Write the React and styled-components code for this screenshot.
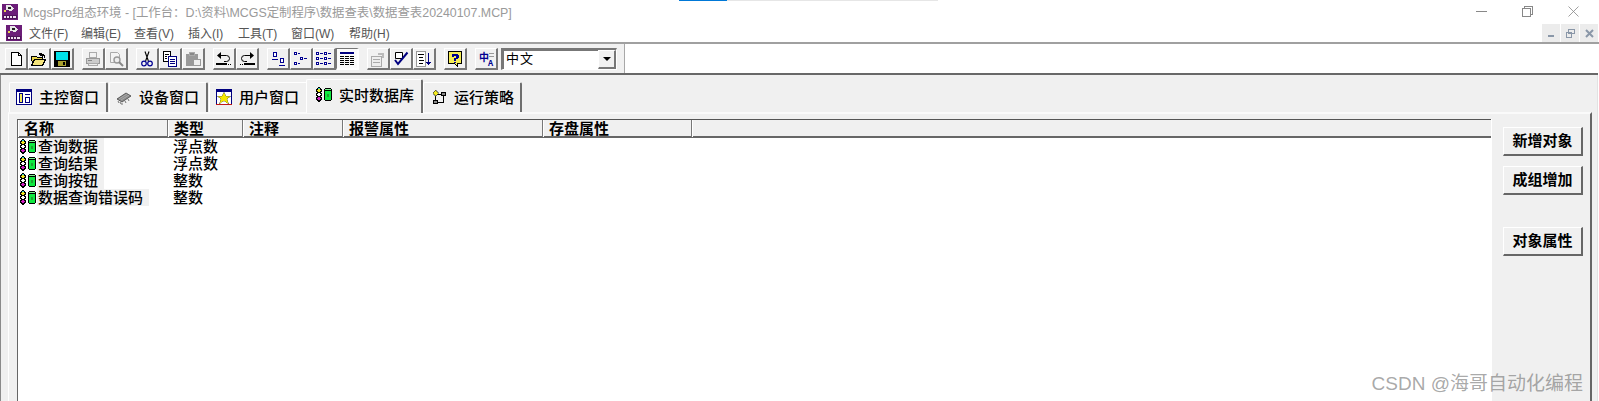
import styled, { createGlobalStyle } from "styled-components";

const GlobalStyle = createGlobalStyle`
  html, body {
    margin: 0;
    padding: 0;
    background: #fff;
  }
  * {
    box-sizing: border-box;
  }
`;

const CJK = `"Liberation Sans", "Noto Sans CJK SC", sans-serif`;

const AppWindow = styled.div`
  position: relative;
  width: 1599px;
  height: 401px;
  overflow: hidden;
  display: flex;
  flex-direction: column;
  font-family: ${CJK};
  background: #fff;
`;

const FocusStrip = styled.div`
  position: absolute;
  top: 0;
  left: 679px;
  width: 259px;
  height: 1px;
  background: linear-gradient(90deg, #0078d7 0 48px, #e6e6e6 48px);
`;

const TitleBar = styled.div`
  height: 23px;
  display: flex;
  align-items: center;
  padding-left: 2px;
  color: #9a9a9a;
  font-size: 12.4px;
  flex: none;
`;

const TitleText = styled.span`
  margin-left: 5px;
  white-space: nowrap;
`;

const WindowControls = styled.div`
  margin-left: auto;
  display: flex;
  gap: 35px;
  padding-right: 20px;
  svg {
    display: block;
  }
`;

const MenuBar = styled.div`
  height: 21px;
  display: flex;
  align-items: center;
  padding-left: 6px;
  border-bottom: 2px solid #a0a0a0;
  flex: none;
`;

const MenuItems = styled.div`
  display: flex;
  margin-left: 7px;
`;

const MenuItem = styled.span`
  width: ${(p) => p.$width}px;
  color: #555;
  font-size: 12px;
  white-space: nowrap;
`;

const MdiControls = styled.div`
  margin-left: auto;
  display: flex;
  gap: 1px;
  align-self: flex-start;
  margin-top: 1px;
  padding-right: 1px;
`;

const MdiButton = styled.div`
  width: 18px;
  height: 18px;
  background: #ececec;
  display: flex;
  align-items: center;
  justify-content: center;
`;

const ToolbarRow = styled.div`
  height: 31px;
  margin-right: 1px;
  display: flex;
  flex: none;
  border-bottom: 2px solid #686868;
`;

const Toolbar = styled.div`
  width: 625px;
  display: flex;
  align-items: flex-start;
  padding: 4px 0 0 5px;
  background: #f1f1f1;
  border-right: 1px solid #a8a8a8;
`;

const ToolGroup = styled.div`
  display: flex;
  margin-right: ${(p) => p.$after}px;
`;

const ToolButton = styled.div`
  width: 23px;
  height: 22px;
  display: flex;
  align-items: center;
  justify-content: center;
  background: ${(p) => (p.$pressed ? "#fbfbfb" : "#f1f1f1")};
  border-style: solid;
  border-width: 1px 2px 2px 1px;
  border-color: ${(p) =>
    p.$pressed
      ? "#777 #fff #fff #777"
      : "#fff #777 #777 #fff"};
`;

const LangSelect = styled.div`
  width: 116px;
  height: 22px;
  margin-left: 3px;
  display: flex;
  align-items: stretch;
  background: #fff;
  border-style: solid;
  border-width: 2px 1px 1px 2px;
  border-color: #777 #fff #fff #777;
  box-shadow: 1px 1px 0 #777 inset;
`;

const LangValue = styled.span`
  flex: 1;
  padding-left: 3px;
  font-size: 13px;
  line-height: 18px;
  letter-spacing: 1px;
  color: #000;
`;

const LangArrow = styled.div`
  width: 18px;
  display: flex;
  align-items: center;
  justify-content: center;
  background: #f1f1f1;
  border-style: solid;
  border-width: 1px 2px 2px 1px;
  border-color: #fff #777 #777 #fff;
  &::after {
    content: "";
    border-style: solid;
    border-width: 4px 4px 0;
    border-color: #000 transparent transparent;
  }
`;

const Workspace = styled.div`
  flex: 1;
  min-height: 0;
  margin-right: 1px;
  display: flex;
  flex-direction: column;
  background: #f0f0f0;
  padding: 4px 5px 0 7px;
  border-left: 1px solid #8a8a8a;
  border-right: 1px solid #e2e2e2;
`;

const TabRow = styled.div`
  height: 33px;
  display: flex;
  align-items: flex-end;
  padding-left: 1px;
  flex: none;
`;

const Tab = styled.div`
  position: relative;
  width: ${(p) => p.$width}px;
  height: ${(p) => (p.$active ? 34 : 30)}px;
  margin-left: ${(p) => p.$shift}px;
  margin-bottom: ${(p) => (p.$active ? -1 : 0)}px;
  padding: ${(p) => (p.$active ? "0 0 5px 8px" : `0 0 2px ${p.$inset}px`)};
  z-index: ${(p) => (p.$active ? 1 : 0)};
  display: flex;
  align-items: center;
  gap: ${(p) => (p.$active ? 6 : 7)}px;
  background: #f0f0f0;
  border-style: solid;
  border-width: 1px 2px 0 1px;
  border-color: #fff #6e6e6e #f0f0f0 #fff;
  border-radius: 2px 2px 0 0;
  font-size: 15px;
  font-weight: 500;
  color: #000;
  white-space: nowrap;
  svg {
    flex: none;
  }
`;

const TabPanel = styled.div`
  flex: 1;
  min-height: 0;
  display: flex;
  border-top: 2px solid #fafafa;
  border-left: 1px solid #fff;
  border-right: 2px solid #666;
  padding-left: 8px;
  padding-top: 5px;
`;

const ObjectList = styled.div`
  width: 1474px;
  background: #fff;
  border-top: 1px solid #555;
  border-left: 1px solid #666;
  flex: none;
`;

const listColumns = "150px 75px 100px 200px 149px 1fr";

const ListHeader = styled.div`
  display: grid;
  grid-template-columns: ${listColumns};
  height: 18px;
  background: #f0f0f0;
  border-bottom: 2px solid #666;
`;

const HeaderCell = styled.div`
  padding: 1px 0 0 5px;
  font-size: 15px;
  font-weight: 600;
  line-height: 16px;
  color: #000;
  border-left: 1px solid #fff;
  border-right: 1px solid #777;
  &:last-child {
    border-right: none;
  }
`;

const ListRow = styled.div`
  display: grid;
  grid-template-columns: ${listColumns};
  height: 17px;
  font-size: 15px;
  line-height: 17px;
  color: #000;
`;

const NameCell = styled.div`
  display: flex;
  align-items: center;
  padding-left: 1px;
`;

const NameLabel = styled.span`
  padding: 0 6px 0 1px;
  background: #f0f0f0;
  white-space: nowrap;
  font-weight: 500;
`;

const TypeCell = styled.div`
  padding-left: 5px;
  font-weight: 500;
`;

const SideBar = styled.div`
  flex: 1;
  display: flex;
  flex-direction: column;
  align-items: flex-start;
  padding: 8px 0 0 11px;
  border-left: 1px solid #fff;
`;

const SideButton = styled.div`
  width: 80px;
  height: 29px;
  margin-top: ${(p) => p.$top}px;
  padding-bottom: 3px;
  display: flex;
  align-items: center;
  justify-content: center;
  background: #f0f0f0;
  border-style: solid;
  border-width: 1px 2px 2px 1px;
  border-color: #fff #666 #666 #fff;
  font-size: 15px;
  font-weight: 600;
  color: #000;
`;

const Watermark = styled.div`
  position: absolute;
  right: 16px;
  bottom: 6px;
  font-family: "Liberation Sans", "Noto Sans CJK SC", sans-serif;
  font-size: 19px;
  color: rgba(120, 120, 120, 0.65);
  white-space: nowrap;
`;

const Pixel = styled.svg`
  display: block;
  flex: none;
  shape-rendering: crispEdges;
`;

const Smooth = styled.svg`
  display: block;
  flex: none;
  overflow: visible;
`;

const Icon = ({ children, w = 16, h = 16 }) => (
  <Pixel width={w} height={h} viewBox={`0 0 ${w} ${h}`}>
    {children}
  </Pixel>
);

const SmoothIcon = ({ children, w = 16, h = 16 }) => (
  <Smooth width={w} height={h} viewBox={`0 0 ${w} ${h}`}>
    {children}
  </Smooth>
);

const AppLogo = () => (
  <Icon>
    <rect width="16" height="16" fill="#6b1d78" />
    <path d="M4 1h5l3 4-3 2-5-1z" fill="#e8e8e8" />
    <path d="M6 3h3v2H6z" fill="#222" />
    <path d="M2 6h2v2H2z" fill="#e8d44a" />
    <path d="M1 11h14v4H1z" fill="#4d1458" />
    <path d="M2 12h2v2H2zM5 12h2v2H5zM8 12h2v2H8zM11 12h3v2h-3z" fill="#f0e0f0" />
  </Icon>
);

const NewFile = () => (
  <Icon>
    <path d="M3.5 1.5h7l3 3v10h-10z" fill="#fff" stroke="#000" />
    <path d="M10.5 1.5v3h3" fill="none" stroke="#000" />
  </Icon>
);

const OpenFile = () => (
  <Icon>
    <path d="M0.5 5.5h5l1 1h5v2h-8l-2 5z" fill="#e8d44a" stroke="#000" />
    <path d="M3.5 8.5h11l-3 6h-11z" fill="#f3e37a" stroke="#000" />
    <path d="M8 2h3v1h2v1h1v3h-1V5h-1v2h-1V5H9V4H8z" fill="#000" />
  </Icon>
);

const SaveFile = () => (
  <Icon>
    <rect width="16" height="16" fill="#000" />
    <rect x="2" y="1" width="12" height="8" fill="#00e0e8" />
    <rect x="4" y="10" width="8" height="5" fill="#a8a030" />
    <rect x="9" y="11" width="2" height="3" fill="#000" />
  </Icon>
);

const PrintFile = () => (
  <Icon>
    <path d="M4.5 1.5h7v5h-7z" fill="#f1f1f1" stroke="#aaa" />
    <path d="M1.5 7.5h13v5h-13z" fill="#ccc" stroke="#999" />
    <path d="M3.5 12.5h9v2h-9z" fill="#eee" stroke="#aaa" />
    <path d="M3 9h4v1H3z" fill="#888" />
  </Icon>
);

const PreviewFile = () => (
  <SmoothIcon>
    <path d="M2.5 1.5h7l2 2v8h-9z" fill="#f4f4f4" stroke="#aaa" />
    <circle cx="9" cy="9" r="3" fill="#eee" stroke="#999" strokeWidth="1.4" />
    <path d="M11 11l4 4" stroke="#888" strokeWidth="2" />
  </SmoothIcon>
);

const Cut = () => (
  <SmoothIcon>
    <path d="M6 0.5l3.4 9.5M10 0.5L6.6 10" stroke="#000" strokeWidth="1.1" fill="none" />
    <circle cx="5" cy="12.5" r="2.3" fill="none" stroke="#000090" strokeWidth="1.2" />
    <circle cx="11" cy="12.5" r="2.3" fill="none" stroke="#000090" strokeWidth="1.2" />
  </SmoothIcon>
);

const Copy = () => (
  <Icon>
    <path d="M1.5 0.5h7v10h-7z" fill="#fff" stroke="#000" />
    <path d="M3 3h4v1H3zM3 5h2v1H3zM3 7h2v1H3z" fill="#000" />
    <path d="M6.5 5.5h8v10h-8z" fill="#fff" stroke="#000080" />
    <path d="M8 8h5v1H8zM8 10h5v1H8zM8 12h5v1H8z" fill="#000080" />
  </Icon>
);

const Paste = () => (
  <Icon>
    <path d="M1 3h12v12H1z" fill="#999" />
    <path d="M4.5 1.5h5v3h-5z" fill="#888" stroke="#aaa" />
    <path d="M8.5 8.5h7v6h-7z" fill="#eee" stroke="#999" />
  </Icon>
);

const Undo = ({ flip }) => (
  <SmoothIcon>
    <g transform={flip ? "translate(16 0) scale(-1 1)" : undefined}>
      <path d="M4 4.5h6.5a3 3 0 0 1 0 6H8" fill="none" stroke="#000" />
      <path d="M5 1v7L1 4.5z" fill="#000" />
      <path d="M0 12h11v2H0zM12 13h1v1h-1zM14 13h1v1h-1z" fill="#000" />
    </g>
  </SmoothIcon>
);

const LargeIcons = () => (
  <Icon>
    <path d="M3.5 1.5h3v4h-3z" fill="#fff" stroke="#000090" />
    <path d="M2 8h6v1H2z" fill="#000090" />
    <path d="M10.5 7.5h3v4h-3z" fill="#fff" stroke="#000090" />
    <path d="M9 14h6v1H9z" fill="#000090" />
  </Icon>
);

const SmallIcons = () => (
  <Icon>
    <path d="M1.5 1.5h2v2h-2zM7.5 6.5h2v2h-2zM1.5 11.5h2v2h-2z" fill="#fff" stroke="#000090" />
    <path d="M5 2h2v1H5zM11 7h3v1h-3zM5 12h2v1H5z" fill="#000090" />
  </Icon>
);

const ListIcons = () => (
  <Icon>
    {[2, 7, 12].map((y) => (
      <g key={y}>
        <path d={`M0.5 ${y - 0.5}h2v2h-2zM8.5 ${y - 0.5}h2v2h-2z`} fill="#fff" stroke="#000090" />
        <path d={`M4 ${y}h3v1H4zM12 ${y}h3v1h-3z`} fill="#000090" />
      </g>
    ))}
  </Icon>
);

const DetailIcons = () => (
  <Icon>
    <path d="M1 1h14v2H1z" fill="#000080" />
    <path d="M1 5h14v1H1zM1 7h14v1H1zM1 9h14v1H1zM1 11h14v1H1zM1 13h14v1H1z" fill="#000" />
    <path d="M5 5h1v9H5zM10 5h1v9h-1z" fill="#f1f1f1" />
  </Icon>
);

const Properties = () => (
  <Icon>
    <path d="M1.5 5.5h10v10h-10z" fill="#eee" stroke="#aaa" />
    <path d="M3 8h7v1H3zM3 11h7v1H3z" fill="#aaa" />
    <path d="M8 2h6v5h-2V4H8z" fill="#bbb" />
  </Icon>
);

const CheckList = () => (
  <SmoothIcon>
    <path d="M2.5 1.5h7v6h-7z" fill="#fff" stroke="#000" />
    <path d="M2 9l3 4L14.5 1.5" fill="none" stroke="#000080" strokeWidth="2" />
  </SmoothIcon>
);

const SortDown = () => (
  <Icon>
    <path d="M0.5 0.5h9v15h-9z" fill="#fff" stroke="#999" />
    <path d="M2 3h6v1H2zM3 6h4v1H3zM3 9h5v1H3zM3 12h4v1H3z" fill="#000" />
    <path d="M12 2h1v9h2v1h-1v1h-1v1h-1v-1h-1v-1h-1v-1h2z" fill="#000080" />
  </Icon>
);

const HelpBubble = () => (
  <Icon>
    <path d="M1.5 0.5h13v12h-4v3l-3-3h-6z" fill="#f5ec55" stroke="#000" />
    <path d="M5 3h6v1h1v3h-1v1H9v2H7V7h2V5H7v1H5z" fill="#000090" />
    <path d="M7 11h2v1H7z" fill="#000090" />
  </Icon>
);

const LangGlyph = styled.text`
  font-family: "Noto Sans CJK SC", sans-serif;
  font-weight: 700;
  fill: #000090;
`;

const LangSwitch = () => (
  <SmoothIcon>
    <path d="M11 2h5v1h-5zM11 5h5v1h-5z" fill="#999" />
    <LangGlyph x="1" y="10" fontSize="10">中</LangGlyph>
    <LangGlyph x="10" y="15" fontSize="8">A</LangGlyph>
  </SmoothIcon>
);

const MainWindowIcon = () => (
  <Icon>
    <rect x="0.5" y="0.5" width="15" height="15" fill="#fff" stroke="#000080" />
    <rect x="1" y="1" width="14" height="2" fill="#000080" />
    <rect x="3.5" y="4.5" width="3" height="9" fill="#f3e85a" stroke="#000080" />
    <rect x="9" y="5" width="5" height="1" fill="#000080" />
    <rect x="9.5" y="8.5" width="4" height="5" fill="none" stroke="#000080" />
  </Icon>
);

const DeviceIcon = () => (
  <SmoothIcon>
    <path d="M1 10 10 4l5 3-9 6z" fill="#8c8c8c" stroke="#444" strokeWidth="0.8" />
    <path d="M3 10l8-5M5 11l8-5" stroke="#bbb" strokeWidth="0.6" />
    <path d="M2 12l1 2M4 13l1 2M6 14v2M9 12l1 2M12 10l1 2" stroke="#555" strokeWidth="0.8" />
  </SmoothIcon>
);

const UserWindowIcon = () => (
  <Icon>
    <rect width="16" height="16" fill="#fff" />
    <rect width="16" height="3" fill="#000080" />
    <rect y="3" width="1" height="12" fill="#000080" />
    <rect x="15" y="3" width="1" height="12" fill="#000080" />
    <path d="M8 3l2 4h5l-4 3 2 5-5-3-5 3 2-5-4-3h5z" fill="#f5e800" stroke="#555" strokeWidth="0.4" />
    <rect y="15" width="16" height="1" fill="#c01818" />
  </Icon>
);

const DatabaseIcon = () => (
  <Icon w={18} h={15}>
    <path d="M3 0h2v1h1v1h1v3H6v1h1v3H6v1h1v3H6v1H5v1H3v-1H2v-1H1v-3h1V9H1V6h1V5H1V2h1V1h1z" fill="#000" />
    <path d="M3 1h2v1H3z" fill="#20c8d0" />
    <path d="M2 3h4v1H2zM3 2h2v3H3z" fill="#f0e820" />
    <path d="M2 7h4v1H2zM3 6h2v3H3z" fill="#fff" />
    <path d="M2 11h4v1H2zM3 10h2v3H3z" fill="#d020c0" />
    <path d="M10 1h6v1h1v11h-1v1h-6v-1H9V2h1z" fill="#000" />
    <path d="M10 2h6v1h-6z" fill="#80f090" />
    <path d="M10 4h6v9h-6z" fill="#10e840" />
    <path d="M12 7h2v3h-2z" fill="#20a030" />
  </Icon>
);

const StrategyIcon = () => (
  <Icon w={15}>
    <path d="M3 3h1v11H3zM3 5h9v1H3zM11 5h1v9h-1zM3 13h9v1H3z" fill="#000" />
    <path d="M3 1h1v1h1v1h1v2H5v1H4v1H3V6H2V5H1V3h1V2h1z" fill="#f5ec20" stroke="#333" strokeWidth="0.5" />
    <rect x="9.5" y="3.5" width="4" height="3" fill="#888" stroke="#000" />
    <rect x="1.5" y="11.5" width="4" height="3" fill="#888" stroke="#000" />
  </Icon>
);

const menus = [
  ["文件(F)", 52],
  ["编辑(E)", 53],
  ["查看(V)", 54],
  ["插入(I)", 50],
  ["工具(T)", 53],
  ["窗口(W)", 58],
  ["帮助(H)", 50],
];

const toolGroups = [
  { after: 8, tools: [{ icon: <NewFile /> }, { icon: <OpenFile /> }, { icon: <SaveFile /> }] },
  { after: 8, tools: [{ icon: <PrintFile /> }, { icon: <PreviewFile /> }] },
  { after: 8, tools: [{ icon: <Cut /> }, { icon: <Copy /> }, { icon: <Paste /> }] },
  { after: 8, tools: [{ icon: <Undo /> }, { icon: <Undo flip /> }] },
  {
    after: 8,
    tools: [
      { icon: <LargeIcons /> },
      { icon: <SmallIcons /> },
      { icon: <ListIcons /> },
      { icon: <DetailIcons />, pressed: true },
    ],
  },
  { after: 8, tools: [{ icon: <Properties /> }, { icon: <CheckList /> }, { icon: <SortDown /> }] },
  { after: 8, tools: [{ icon: <HelpBubble /> }] },
  { after: 0, tools: [{ icon: <LangSwitch /> }] },
];

const tabs = [
  { label: "主控窗口", icon: <MainWindowIcon />, width: 99, shift: 0, inset: 6 },
  { label: "设备窗口", icon: <DeviceIcon />, width: 99, shift: 1, inset: 6 },
  { label: "用户窗口", icon: <UserWindowIcon />, width: 99, shift: 1, inset: 6 },
  { label: "实时数据库", icon: <DatabaseIcon />, width: 117, shift: -2, active: true },
  { label: "运行策略", icon: <StrategyIcon />, width: 99, shift: 0, inset: 8 },
];

const columns = ["名称", "类型", "注释", "报警属性", "存盘属性", ""];

const rows = [
  { name: "查询数据", type: "浮点数" },
  { name: "查询结果", type: "浮点数" },
  { name: "查询按钮", type: "整数" },
  { name: "数据查询错误码", type: "整数" },
];

const sideButtons = [
  { label: "新增对象", top: 0 },
  { label: "成组增加", top: 10 },
  { label: "对象属性", top: 32 },
];

export default function App() {
  return (
    <>
      <GlobalStyle />
      <AppWindow>
        <FocusStrip />
        <TitleBar>
          <AppLogo />
          <TitleText>McgsPro组态环境 - [工作台：D:\资料\MCGS定制程序\数据查表\数据查表20240107.MCP]</TitleText>
          <WindowControls>
            <svg width="11" height="11" viewBox="0 0 11 11">
              <path d="M0 5.5h11" stroke="#888" />
            </svg>
            <svg width="11" height="11" viewBox="0 0 11 11" shapeRendering="crispEdges">
              <path d="M0.5 2.5h8v8h-8zM2.5 2.5v-2h8v8h-2" fill="none" stroke="#888" />
            </svg>
            <svg width="11" height="11" viewBox="0 0 11 11">
              <path d="M0.5 0.5l10 10M10.5 0.5l-10 10" stroke="#888" strokeWidth="0.8" />
            </svg>
          </WindowControls>
        </TitleBar>
        <MenuBar>
          <AppLogo />
          <MenuItems>
            {menus.map(([label, width]) => (
              <MenuItem key={label} $width={width}>
                {label}
              </MenuItem>
            ))}
          </MenuItems>
          <MdiControls>
            <MdiButton>
              <Icon w={8} h={8}>
                <path d="M1 6h6v2H1z" fill="#8a97a8" />
              </Icon>
            </MdiButton>
            <MdiButton>
              <Icon w={9} h={9}>
                <path d="M2.5 0.5h6v4h-6zM0.5 3.5h5v5h-5z" fill="#ececec" stroke="#8a97a8" />
              </Icon>
            </MdiButton>
            <MdiButton>
              <SmoothIcon w={9} h={9}>
                <path d="M1 1l7 7M8 1l-7 7" stroke="#8a97a8" strokeWidth="2" />
              </SmoothIcon>
            </MdiButton>
          </MdiControls>
        </MenuBar>
        <ToolbarRow>
          <Toolbar>
            {toolGroups.map((group, i) => (
              <ToolGroup key={i} $after={group.after}>
                {group.tools.map((tool, j) => (
                  <ToolButton key={j} $pressed={tool.pressed}>
                    {tool.icon}
                  </ToolButton>
                ))}
              </ToolGroup>
            ))}
            <LangSelect>
              <LangValue>中文</LangValue>
              <LangArrow />
            </LangSelect>
          </Toolbar>
        </ToolbarRow>
        <Workspace>
          <TabRow>
            {tabs.map((tab) => (
              <Tab
                key={tab.label}
                $width={tab.width}
                $shift={tab.shift}
                $inset={tab.inset}
                $active={tab.active}
              >
                {tab.icon}
                {tab.label}
              </Tab>
            ))}
          </TabRow>
          <TabPanel>
            <ObjectList>
              <ListHeader>
                {columns.map((col, i) => (
                  <HeaderCell key={i}>{col}</HeaderCell>
                ))}
              </ListHeader>
              {rows.map((row) => (
                <ListRow key={row.name}>
                  <NameCell>
                    <DatabaseIcon />
                    <NameLabel>{row.name}</NameLabel>
                  </NameCell>
                  <TypeCell>{row.type}</TypeCell>
                </ListRow>
              ))}
            </ObjectList>
            <SideBar>
              {sideButtons.map((btn) => (
                <SideButton key={btn.label} $top={btn.top}>
                  {btn.label}
                </SideButton>
              ))}
            </SideBar>
          </TabPanel>
        </Workspace>
        <Watermark>CSDN @海哥自动化编程</Watermark>
      </AppWindow>
    </>
  );
}
